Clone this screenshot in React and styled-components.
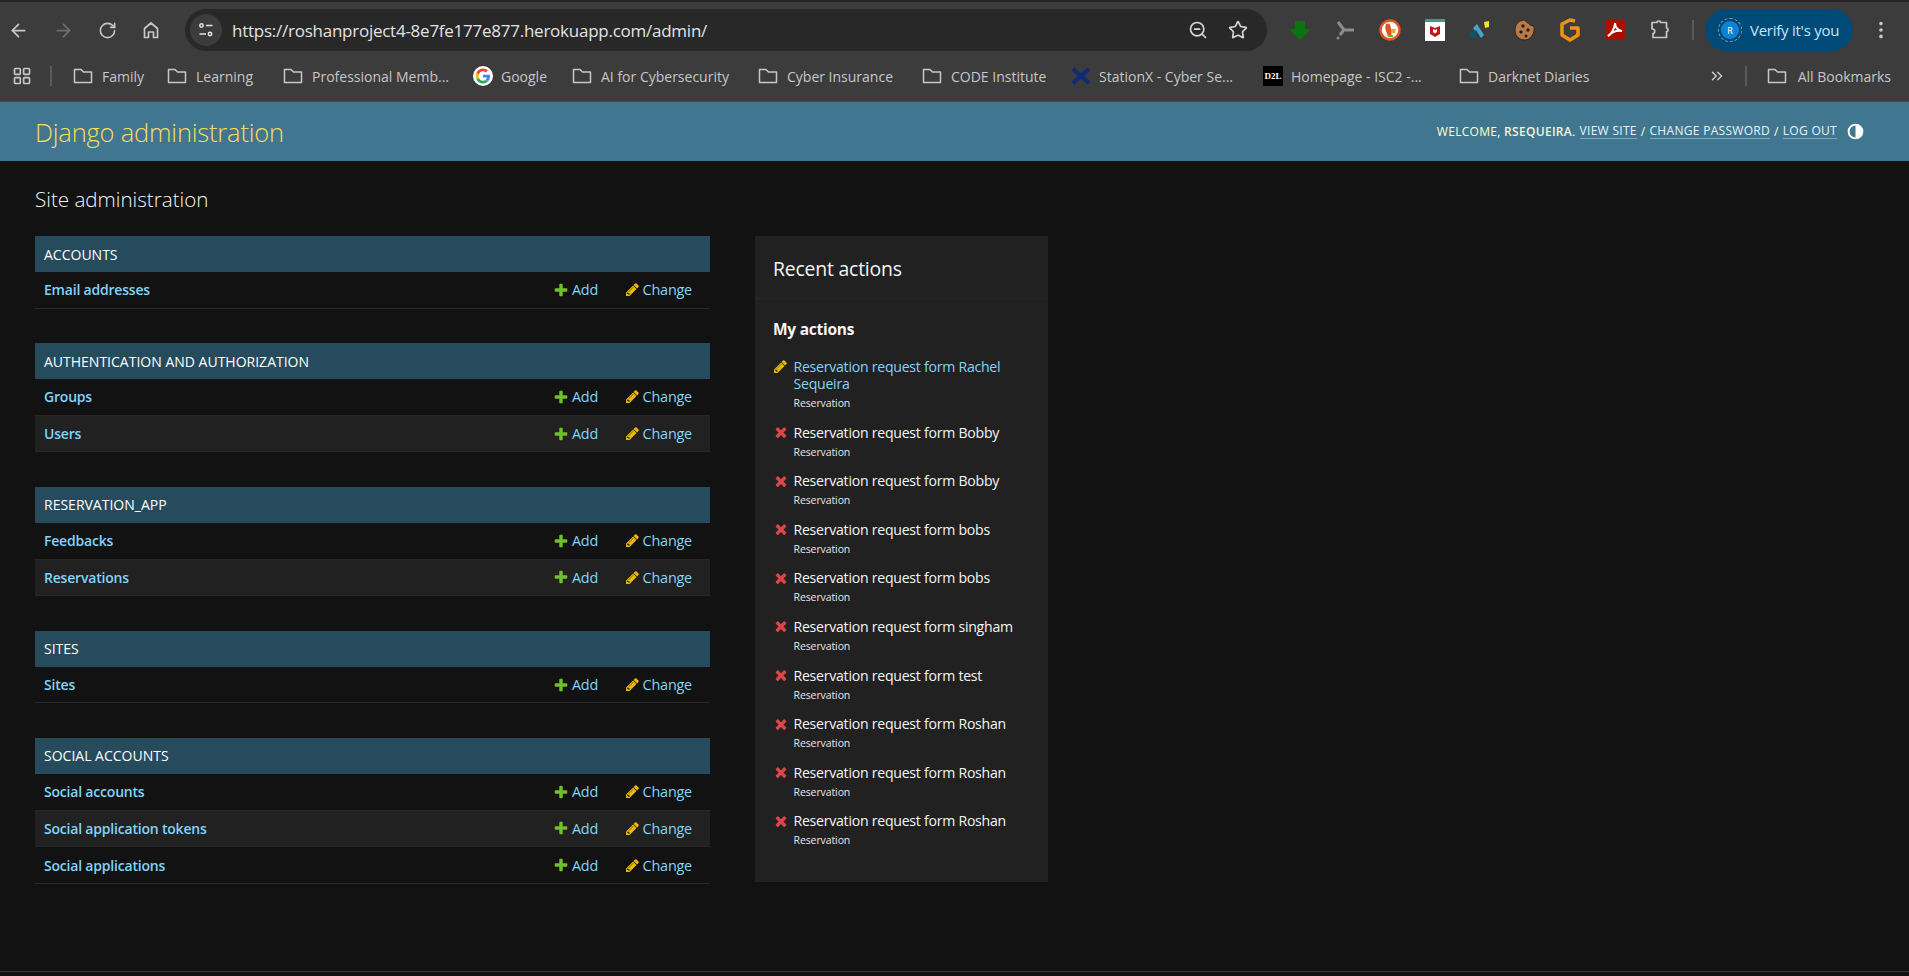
import React from "react"
import styled, { createGlobalStyle } from "styled-components"
import { ArrowLeft, ArrowRight, RotateCw, ZoomOut, Star, LayoutGrid, ChevronsRight, EllipsisVertical } from "lucide-react"

const UI_FONT = `"Open Sans", "Noto Sans", sans-serif`

const modules = [
  { name: "Accounts", rows: ["Email addresses"] },
  { name: "Authentication and Authorization", rows: ["Groups", "Users"] },
  { name: "Reservation_App", rows: ["Feedbacks", "Reservations"] },
  { name: "Sites", rows: ["Sites"] },
  { name: "Social Accounts", rows: ["Social accounts", "Social application tokens", "Social applications"] },
]

const actions = [
  { title: "Reservation request form Rachel Sequeira", kind: "change" },
  { title: "Reservation request form Bobby", kind: "delete" },
  { title: "Reservation request form Bobby", kind: "delete" },
  { title: "Reservation request form bobs", kind: "delete" },
  { title: "Reservation request form bobs", kind: "delete" },
  { title: "Reservation request form singham", kind: "delete" },
  { title: "Reservation request form test", kind: "delete" },
  { title: "Reservation request form Roshan", kind: "delete" },
  { title: "Reservation request form Roshan", kind: "delete" },
  { title: "Reservation request form Roshan", kind: "delete" },
]

const bookmarks = [
  { label: "Family", width: 94 },
  { label: "Learning", width: 116 },
  { label: "Professional Memb...", width: 190 },
  { label: "Google", icon: "google", width: 99 },
  { label: "AI for Cybersecurity", width: 186 },
  { label: "Cyber Insurance", width: 164 },
  { label: "CODE Institute", width: 149 },
  { label: "StationX - Cyber Se...", icon: "stationx", width: 192 },
  { label: "Homepage - ISC2 -...", icon: "d2l", width: 196 },
  { label: "Darknet Diaries" },
]

function FolderIcon() {
  return (
    <svg width="20" height="20" viewBox="0 0 20 20" fill="none" stroke="#c7c7c7" strokeWidth="1.5">
      <path d="M1.500 3.500h6.500l2.500 2.500h8v10.500H1.500z" strokeLinejoin="round" />
    </svg>
  )
}

function GoogleIcon() {
  return (
    <svg width="20" height="20" viewBox="0 0 48 48">
      <circle cx="24" cy="24" r="24" fill="#fff" />
      <path fill="#4285f4" d="M41 24.4c0-1.300-.1-2.400-.3-3.500H24v6.700h9.600c-.4 2.200-1.700 4-3.500 5.300l5.500 4.300c3.300-3 5.400-7.500 5.400-12.800z" />
      <path fill="#34a853" d="M24 42c4.700 0 8.600-1.500 11.500-4.200L30 33.500c-1.500 1-3.500 1.700-6 1.700-4.600 0-8.500-3.100-9.900-7.300l-5.700 4.400C11.300 38 17.200 42 24 42z" />
      <path fill="#fbbc05" d="M14.100 27.900c-.4-1.100-.6-2.300-.6-3.900s.2-2.800.6-3.900l-5.700-4.400C7.200 18 6.500 20.900 6.500 24s.7 6 1.900 8.300z" />
      <path fill="#ea4335" d="M24 12.800c2.600 0 4.900.9 6.700 2.600l4.900-4.900C32.600 7.800 28.700 6 24 6 17.200 6 11.300 10 8.400 15.700l5.700 4.400c1.400-4.200 5.300-7.300 9.900-7.300z" />
    </svg>
  )
}

function StationXIcon() {
  return (
    <svg width="20" height="20" viewBox="0 0 20 20">
      <path d="M2 3 L18 17 M18 3 L2 17" stroke="#0e2a78" strokeWidth="4" />
    </svg>
  )
}

function TuneIcon() {
  return (
    <svg width="18" height="18" viewBox="0 0 18 18" fill="none" stroke="#e3e3e3" strokeWidth="1.500">
      <circle cx="4.500" cy="4.500" r="1.700" />
      <path d="M9 4.500h6.500M2.500 13H9" />
      <circle cx="13" cy="13" r="1.700" />
    </svg>
  )
}

function HomeIcon() {
  return (
    <svg width="20" height="20" viewBox="0 0 20 20" fill="none" stroke="#c7c7c7" strokeWidth="1.700" strokeLinejoin="round">
      <path d="M3.500 8.500 10 3l6.500 5.500v9h-4v-5.500h-5v5.500h-4z" />
    </svg>
  )
}

function PuzzleIcon() {
  return (
    <svg width="22" height="22" viewBox="0 0 22 22" fill="none" stroke="#c7c7c7" strokeWidth="1.700" strokeLinejoin="round">
      <path d="M3 3.500h5c0-2 3.500-2 3.500 0h6v5.500c2 0 2 3.500 0 3.500v6H4v-4c2 0 2.500-4 0-4.500H3z" />
    </svg>
  )
}

function ThemeIcon() {
  return (
    <svg width="17" height="17" viewBox="0 0 16 16">
      <circle cx="8" cy="8" r="6.500" fill="none" stroke="#fff" strokeWidth="1.800" />
      <path d="M8 1.500a6.500 6.500 0 0 1 0 13z" fill="#fff" />
    </svg>
  )
}

const extensions = [
  <svg key="dl" width="24" height="24" viewBox="0 0 24 24"><path d="M7 3h10v8h6L12 22 1 11h6z" fill="#0a7412" /></svg>,
  <svg key="fork" width="24" height="24" viewBox="0 0 24 24" fill="none" stroke="#8c8c8c" strokeWidth="3"><path d="M5 4l6 8h10M10 13l-3 4" /><circle cx="5" cy="20" r="1.500" fill="#8c8c8c" stroke="none" /></svg>,
  <svg key="duck" width="24" height="24" viewBox="0 0 24 24"><circle cx="12" cy="12" r="9.500" fill="#fff" stroke="#e2531f" strokeWidth="2.500" /><path d="M8 6c4-2 5 2 5 6 0 3 1 4 0 6l-3 1C9 14 6 11 8 6z" fill="#e2531f" /><path d="M13 11h5l-1 4h-4z" fill="#f5a623" /><path d="M10 17h5v2h-5z" fill="#53b848" /></svg>,
  <svg key="mcafee" width="24" height="24" viewBox="0 0 24 24"><rect x="2" y="1" width="20" height="22" fill="#fff" /><rect x="2" y="1" width="20" height="3" fill="#3c9d86" /><path d="M7 8l5 2 5-2v8l-5 3-5-3z" fill="#c01818" /><path d="M10 11l2 1 2-1v3l-2 1.500-2-1.500z" fill="#fff" /></svg>,
  <svg key="nord" width="24" height="24" viewBox="0 0 24 24"><path d="M5 10l4-4 7 11-3 3-5-8-1 1z" fill="#3fa6c9" /><rect x="2" y="13" width="6" height="7" fill="#14506b" /><path d="M16 4l5-1v6l-4 1z" fill="#f4e22e" /></svg>,
  <svg key="cookie" width="24" height="24" viewBox="0 0 24 24"><path d="M12 2c1 2 2 3 4 3 0 2 2 3 5 3 1 7-3 14-9 14S2 18 2 12 6 2 12 2z" fill="#b97a4a" stroke="#33251c" /><circle cx="10" cy="8" r="1.700" fill="#2b1d14" /><circle cx="15" cy="12" r="1.700" fill="#2b1d14" /><circle cx="8" cy="14" r="1.700" fill="#2b1d14" /><circle cx="13" cy="18" r="1.500" fill="#2b1d14" /></svg>,
  <svg key="g" width="24" height="24" viewBox="0 0 24 24" fill="none" stroke="#f29111" strokeWidth="3.500" strokeLinejoin="round"><path d="M17 3l-5-1-8 4v11l8 5 8-5v-7h-8" /></svg>,
  <svg key="pdf" width="24" height="24" viewBox="0 0 24 24"><rect x="2" y="2" width="20" height="20" rx="2" fill="#a90f00" /><path d="M5 18c4-2 7-9 7-13 0 4 3 8 7 8-5-1-10 1-14 5z" fill="none" stroke="#fff" strokeWidth="2" /></svg>,
]

export default function App() {
  return (
    <>
      <GlobalStyle />
      <Page>
        <TopEdge />
        <Toolbar>
          <NavButtons>
            <ArrowLeft size={21} color="#c7c7c7" />
            <ArrowRight size={21} color="#6f6f6f" />
            <RotateCw size={19} color="#c7c7c7" />
            <HomeIcon />
          </NavButtons>
          <Omnibox>
            <TuneButton><TuneIcon /></TuneButton>
            <Url>https://roshanproject4-8e7fe177e877.herokuapp.com/admin/</Url>
            <OmniIcons>
              <ZoomOut size={20} color="#d5d5d5" />
              <Star size={20} color="#d5d5d5" />
            </OmniIcons>
          </Omnibox>
          <Extensions>{extensions}</Extensions>
          <PuzzleSlot><PuzzleIcon /></PuzzleSlot>
          <ToolDivider />
          <VerifyPill>
            <Avatar>R</Avatar>
            Verify it's you
          </VerifyPill>
          <MoreSlot><EllipsisVertical size={22} color="#c7c7c7" /></MoreSlot>
        </Toolbar>
        <BookmarkBar>
          <AppsSlot><LayoutGrid size={20} color="#c7c7c7" /></AppsSlot>
          <BarDivider />
          <BookmarkList>
            {bookmarks.map((b) => (
              <Bookmark key={b.label} $width={b.width} $gap={b.icon ? 8 : 9}>
                {!b.icon && <FolderIcon />}
                {b.icon === "google" && <GoogleIcon />}
                {b.icon === "stationx" && <StationXIcon />}
                {b.icon === "d2l" && <D2l>D2L</D2l>}
                <span>{b.label}</span>
              </Bookmark>
            ))}
          </BookmarkList>
          <ChevronsRight size={18} color="#c7c7c7" />
          <BarDivider $wide />
          <Bookmark $gap={11}>
            <FolderIcon />
            <span>All Bookmarks</span>
          </Bookmark>
        </BookmarkBar>
        <Header>
          <Branding>Django administration</Branding>
          <UserTools>
            <span>Welcome, <strong>rsequeira</strong>.</span>
            <UserLink>View site</UserLink>/
            <UserLink>Change password</UserLink>/
            <UserLink>Log out</UserLink>
            <ThemeSlot><ThemeIcon /></ThemeSlot>
          </UserTools>
        </Header>
        <Content>
          <Title>Site administration</Title>
          <Columns>
            <AppList>
              {modules.map((m) => (
                <Module key={m.name}>
                  <Caption>{m.name}</Caption>
                  {m.rows.map((row, i) => (
                    <Row key={row} $alt={i % 2 === 1}>
                      <RowName>{row}</RowName>
                      <RowAction $w={65}>
                        <PlusIcon />
                        Add
                      </RowAction>
                      <RowAction $w={94}>
                        <PencilIcon size={15} />
                        Change
                      </RowAction>
                    </Row>
                  ))}
                </Module>
              ))}
            </AppList>
            <RecentPanel>
              <RecentTitle>Recent actions</RecentTitle>
              <RecentBody>
                <MyActions>My actions</MyActions>
                <ActionList>
                  {actions.map((a, i) => (
                    <ActionItem key={i}>
                      <ActionIcon>
                        {a.kind === "change" ? <PencilIcon size={15} /> : <CrossIcon />}
                      </ActionIcon>
                      <div>
                        <ActionTitle $link={a.kind === "change"}>{a.title}</ActionTitle>
                        <ActionType>Reservation</ActionType>
                      </div>
                    </ActionItem>
                  ))}
                </ActionList>
              </RecentBody>
            </RecentPanel>
          </Columns>
        </Content>
        <BottomEdge />
      </Page>
    </>
  )
}

function PlusIcon() {
  return (
    <svg width="16" height="16" viewBox="0 0 1792 1792">
      <path fill="#70bf2b" d="M1600 796v192q0 40-28 68t-68 28h-416v416q0 40-28 68t-68 28h-192q-40 0-68-28t-28-68v-416h-416q-40 0-68-28t-28-68v-192q0-40 28-68t68-28h416v-416q0-40 28-68t68-28h192q40 0 68 28t28 68v416h416q40 0 68 28t28 68z" />
    </svg>
  )
}

function PencilIcon({ size }) {
  return (
    <svg width={size} height={size} viewBox="0 0 1792 1792">
      <path fill="#efb80b" d="M491 1536l91-91-235-235-91 91v107h128v128h107zm523-928q0-22-22-22-10 0-17 7l-542 542q-7 7-7 17 0 22 22 22 10 0 17-7l542-542q7-7 7-17zm-54-192l416 416-832 832h-416v-416zm683 96q0 53-37 90l-166 166-416-416 166-165q36-38 90-38 53 0 91 38l235 234q37 39 37 91z" />
    </svg>
  )
}

function CrossIcon() {
  return (
    <svg width="16" height="16" viewBox="0 0 1792 1792">
      <path fill="#dd4646" d="M1490 1322q0 40-28 68l-136 136q-28 28-68 28t-68-28l-294-294-294 294q-28 28-68 28t-68-28l-136-136q-28-28-28-68t28-68l294-294-294-294q-28-28-28-68t28-68l136-136q28-28 68-28t68 28l294 294 294-294q28-28 68-28t68 28l136 136q28 28 28 68t-28 68l-294 294 294 294q28 28 28 68z" />
    </svg>
  )
}

const GlobalStyle = createGlobalStyle`
  html, body { margin: 0; padding: 0; background: #121212; }
  * { box-sizing: border-box; }
  body { font-family: ${UI_FONT}; overflow: hidden; }
`

const Page = styled.div`
  width: 1909px;
  height: 976px;
  display: flex;
  flex-direction: column;
  background: #121212;
  overflow: hidden;
`
const TopEdge = styled.div`
  height: 2px;
  background: #252525;
`
const Toolbar = styled.div`
  height: 54px;
  padding: 2px 0 0 7px;
  display: flex;
  align-items: center;
  background: #3c3c3c;
`
const NavButtons = styled.div`
  width: 178px;
  display: flex;
  align-items: center;
  gap: 24px;
  padding-left: 1px;
`
const Omnibox = styled.div`
  width: 1082px;
  height: 42px;
  padding: 0 19px 0 5px;
  display: flex;
  align-items: center;
  background: #282828;
  border-radius: 21px;
`
const TuneButton = styled.div`
  width: 32px;
  height: 32px;
  display: flex;
  align-items: center;
  justify-content: center;
  background: #3c3c3c;
  border-radius: 50%;
`
const Url = styled.div`
  flex: 1;
  margin-left: 10px;
  font-size: 17px;
  color: #e3e3e3;
  letter-spacing: -0.25px;
  white-space: nowrap;
`
const OmniIcons = styled.div`
  display: flex;
  gap: 20px;
`
const Extensions = styled.div`
  padding-left: 21px;
  display: flex;
  align-items: center;
  gap: 21px;
`
const PuzzleSlot = styled.div`
  margin-left: 22px;
  display: flex;
`
const ToolDivider = styled.div`
  width: 2px;
  height: 20px;
  margin: 0 11px 0 21px;
  background: #5a5a5a;
`
const VerifyPill = styled.div`
  width: 148px;
  height: 42px;
  padding-left: 16px;
  display: flex;
  align-items: center;
  gap: 11px;
  background: #004a77;
  border-radius: 21px;
  font-size: 15px;
  letter-spacing: -0.25px;
  color: #c2e7ff;
  white-space: nowrap;
`
const Avatar = styled.div`
  width: 18px;
  height: 18px;
  flex: none;
  display: flex;
  align-items: center;
  justify-content: center;
  border-radius: 50%;
  background: #0b84d6;
  outline: 1.5px dashed #7f9fb5;
  outline-offset: 2px;
  font-size: 9px;
  color: #fff;
`
const MoreSlot = styled.div`
  margin-left: 17px;
  display: flex;
`
const BookmarkBar = styled.div`
  height: 46px;
  padding: 0 18px 5px 12px;
  display: flex;
  align-items: center;
  background: #3c3c3c;
  border-bottom: 1px solid #4a4a4a;
`
const AppsSlot = styled.div`
  width: 28px;
  display: flex;
`
const BarDivider = styled.div`
  width: 2px;
  height: 20px;
  margin: ${(p) => (p.$wide ? "0 20px 0 19px" : "0 21px 0 10px")};
  background: #5a5a5a;
`
const BookmarkList = styled.div`
  flex: 1;
  display: flex;
  align-items: center;
`
const Bookmark = styled.div`
  width: ${(p) => (p.$width ? `${p.$width}px` : "auto")};
  flex: none;
  display: flex;
  align-items: center;
  gap: ${(p) => p.$gap}px;
  font-size: 14px;
  color: #c7c7c7;
  white-space: nowrap;
`
const D2l = styled.div`
  width: 20px;
  height: 20px;
  display: flex;
  align-items: center;
  justify-content: center;
  background: #000;
  color: #fff;
  font-family: "Liberation Serif", serif;
  font-size: 9px;
  font-weight: 700;
`
const Header = styled.div`
  height: 59px;
  padding: 0 45px 0 35px;
  display: flex;
  align-items: center;
  justify-content: space-between;
  background: #417690;
`
const Branding = styled.div`
  font-size: 25.5px;
  font-weight: 300;
  color: #f5dd5d;
  letter-spacing: -0.2px;
`
const UserTools = styled.div`
  display: flex;
  align-items: center;
  gap: 4px;
  font-size: 12px;
  letter-spacing: 0.3px;
  text-transform: uppercase;
  color: #ffc;
  strong { font-weight: 600; color: #f5f5dc; }
`
const UserLink = styled.span`
  color: #e8f4f8;
  border-bottom: 1px solid rgba(255, 255, 255, 0.35);
  line-height: 14px;
`
const ThemeSlot = styled.div`
  margin-left: 6px;
  display: flex;
`
const Content = styled.div`
  flex: 1;
  padding: 25px 35px 0;
`
const Title = styled.h1`
  margin: 0 0 24px;
  font-size: 20.6px;
  line-height: 26px;
  font-weight: 300;
  color: #f5f5f5;
`
const Columns = styled.div`
  display: flex;
  align-items: flex-start;
  gap: 45px;
`
const AppList = styled.div`
  width: 675px;
  display: flex;
  flex-direction: column;
  gap: 34.5px;
`
const Module = styled.section``
const Caption = styled.div`
  height: 36px;
  padding-left: 9px;
  display: flex;
  align-items: center;
  background: #264b5d;
  font-size: 14px;
  text-transform: uppercase;
  color: #fff;
`
const Row = styled.div`
  height: 36.67px;
  padding: 0 18px 0 9px;
  display: flex;
  align-items: center;
  background: ${(p) => (p.$alt ? "#212121" : "#121212")};
  border-bottom: 1px solid #272727;
`
const RowName = styled.div`
  flex: 1;
  font-size: 14px;
  font-weight: 600;
  letter-spacing: -0.2px;
  color: #81d4fa;
`
const RowAction = styled.div`
  width: ${(p) => p.$w}px;
  display: flex;
  align-items: center;
  justify-content: flex-end;
  gap: 3px;
  font-size: 14.4px;
  letter-spacing: -0.2px;
  color: #81d4fa;
`
const RecentPanel = styled.aside`
  width: 293px;
  height: 646px;
  background: #212121;
`
const RecentTitle = styled.div`
  height: 63px;
  padding: 3px 18px 0;
  display: flex;
  align-items: center;
  font-size: 19.4px;
  letter-spacing: -0.2px;
  color: #f5f5f5;
  border-bottom: 1px solid #272727;
`
const RecentBody = styled.div`
  padding: 19px 18px 0;
`
const MyActions = styled.div`
  font-size: 15.5px;
  line-height: 22px;
  font-weight: 700;
  letter-spacing: -0.25px;
  color: #f5f5f5;
`
const ActionList = styled.div`
  margin-top: 18px;
  display: flex;
  flex-direction: column;
  gap: 12.6px;
`
const ActionItem = styled.div`
  display: flex;
  align-items: flex-start;
  gap: 4.5px;
`
const ActionIcon = styled.div`
  width: 16px;
  height: 17px;
  flex: none;
  display: flex;
  align-items: center;
`
const ActionTitle = styled.div`
  font-size: 14.1px;
  line-height: 17px;
  letter-spacing: -0.25px;
  color: ${(p) => (p.$link ? "#81d4fa" : "#f5f5f5")};
`
const ActionType = styled.div`
  margin-top: 3px;
  font-size: 10.5px;
  line-height: 16px;
  letter-spacing: -0.1px;
  color: #e6e6e6;
`
const BottomEdge = styled.div`
  height: 5px;
  background: #121212;
  border-top: 1px solid #3c3c3c;
`
